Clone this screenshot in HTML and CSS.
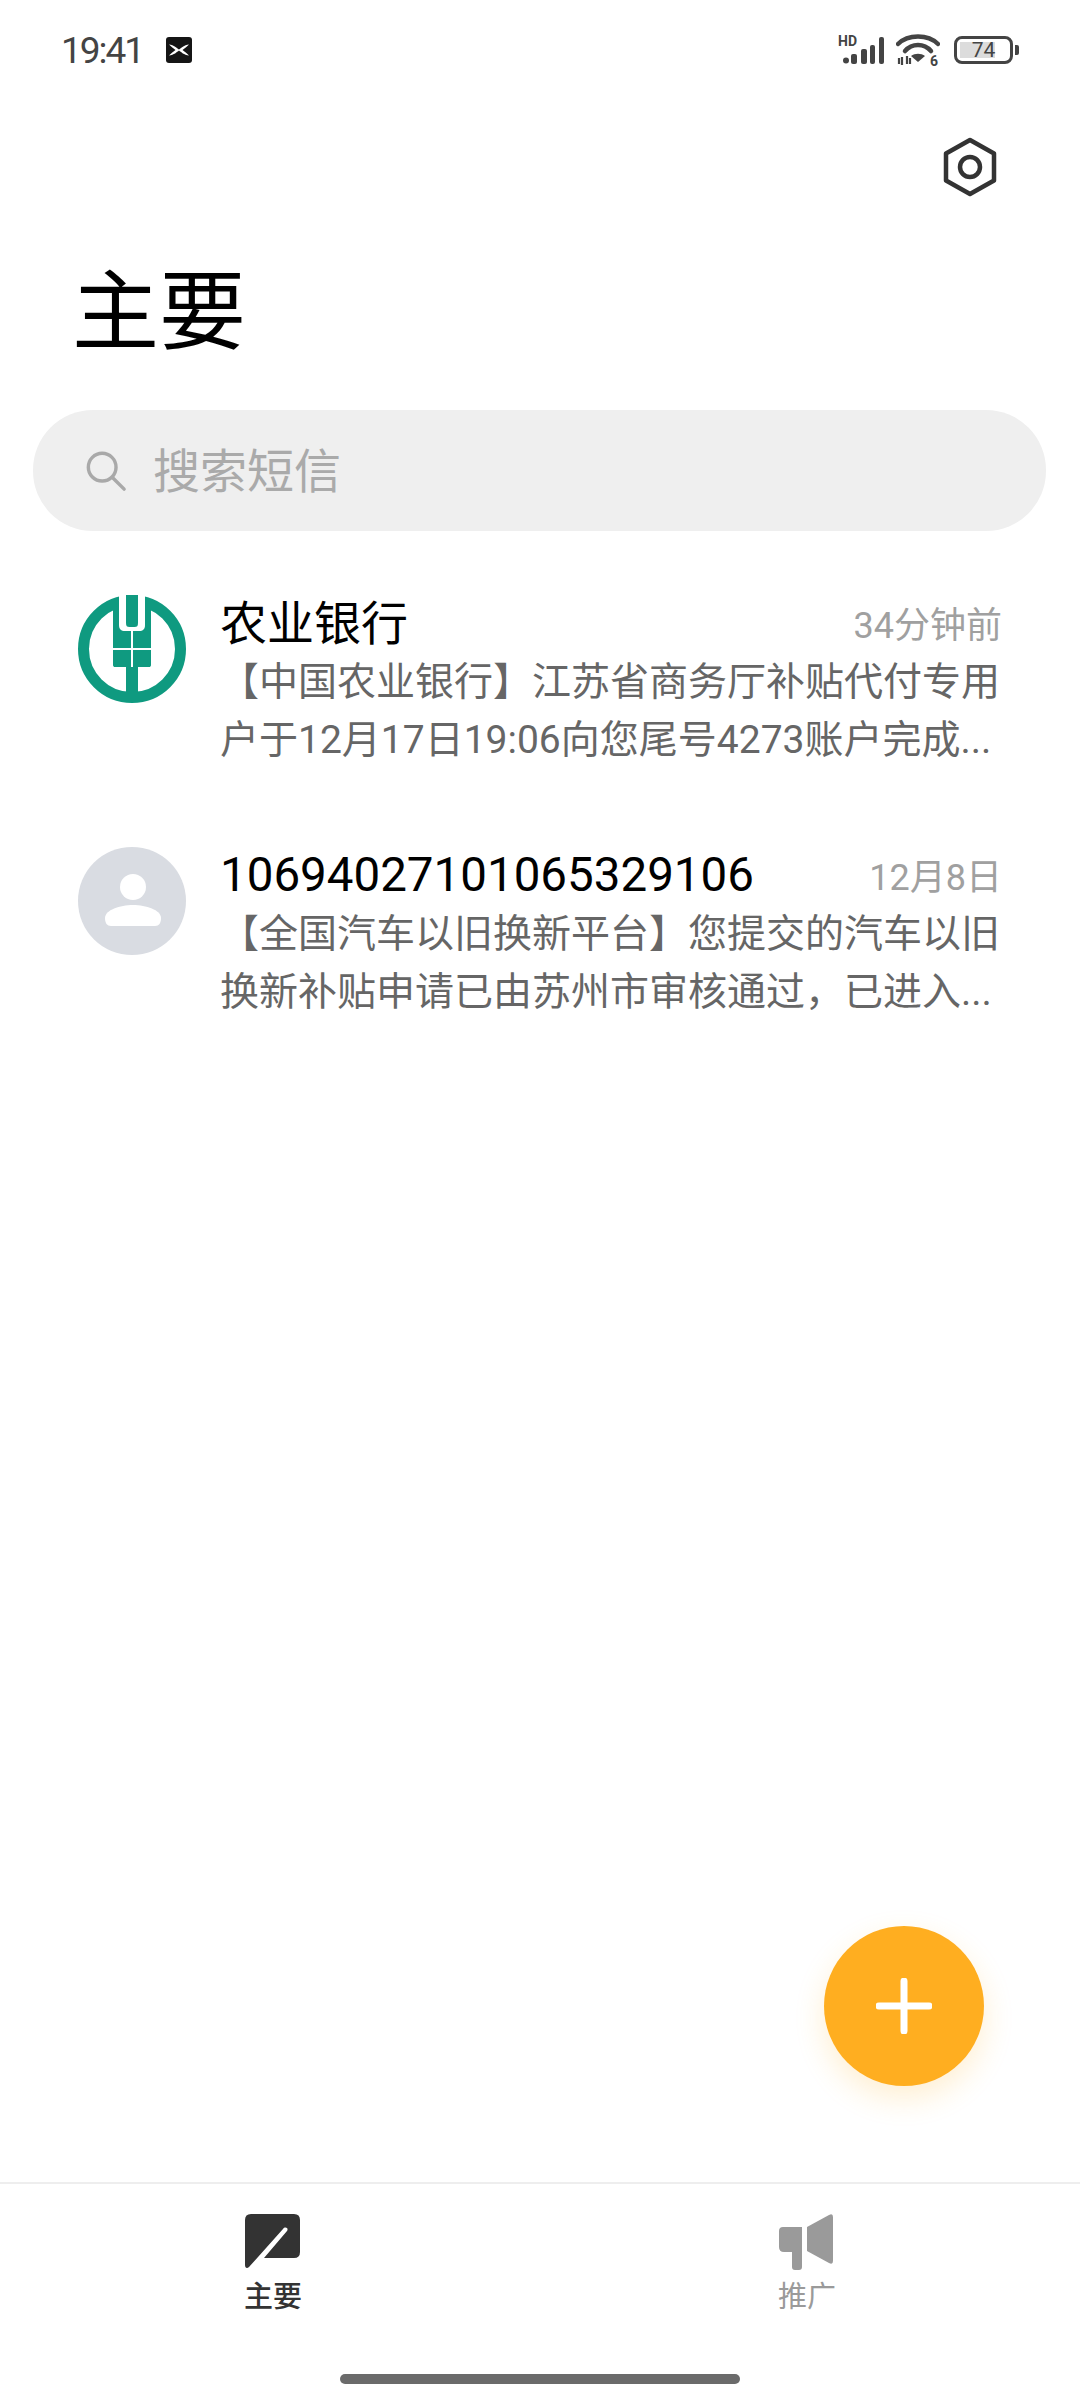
FILE: index.html
```html
<!DOCTYPE html>
<html lang="zh-CN">
<head>
  <meta charset="UTF-8">
  <meta name="viewport" content="width=device-width, initial-scale=1.0">
  <title>主要</title>
  <link rel="stylesheet" href="styles.css">
</head>
<body>
  <div class="page">
    <div class="status-bar">
      <div class="status-left">
        <span class="clock">19:41</span>
        <svg class="app-badge" viewBox="0 0 26 26">
          <rect width="26" height="26" rx="3" fill="#151515"/>
          <path d="M3 7.500C8 8 11 11 13 12.500C15 11 18 8 23 7.500C21 9.500 18.500 11.500 16.500 13C18.500 14.500 21 16.500 23 18.500C18 18 15 15 13 13.500C11 15 8 18 3 18.500C5 16.500 7.500 14.500 9.500 13C7.500 11.500 5 9.500 3 7.500Z" fill="#fff"/>
        </svg>
      </div>
      <div class="status-right">
        <svg class="signal" viewBox="0 -3 48 33">
          <text x="0" y="11" class="hd-label">HD</text>
          <circle cx="8" cy="25.500" r="3" fill="#444"/>
          <rect x="13" y="19" width="6" height="10" rx="2" fill="#444"/>
          <rect x="23" y="14" width="6" height="15" rx="2" fill="#444"/>
          <rect x="32" y="10" width="5" height="19" rx="2" fill="#444"/>
          <rect x="41" y="2" width="5" height="27" rx="2" fill="#444"/>
        </svg>
        <svg class="wifi" viewBox="0 0 44 38">
          <path d="M2 11C12 1 32 1 42 11" fill="none" stroke="#444" stroke-width="4.500" stroke-linecap="round"/>
          <path d="M9 18C16 10 28 10 35 18" fill="none" stroke="#444" stroke-width="4.500" stroke-linecap="round"/>
          <path d="M22 29L15 23C19 20 25 20 29 23Z" fill="#444"/>
          <path d="M3 25L3 31M6 24L6 32M11 23L11 31M14 25L14 31" stroke="#444" stroke-width="2.200"/>
          <text x="34" y="33" class="wifi-six">6</text>
        </svg>
        <div class="battery">
          <div class="battery-shell">
            <div class="battery-fill"></div>
            <span class="battery-num">74</span>
          </div>
          <div class="battery-cap"></div>
        </div>
      </div>
    </div>

    <div class="toolbar">
      <svg class="settings" viewBox="0 0 56 60">
        <path d="M28 3L52 16.500V43.500L28 57L4 43.500V16.500Z" fill="none" stroke="#333" stroke-width="4.500" stroke-linejoin="round"/>
        <circle cx="28" cy="30" r="10" fill="none" stroke="#333" stroke-width="4.500"/>
      </svg>
    </div>

    <h1 class="title">主要</h1>

    <div class="search">
      <svg class="search-icon" viewBox="0 0 44 44">
        <circle cx="18" cy="18" r="14.500" fill="none" stroke="#a9a9a9" stroke-width="3.600"/>
        <path d="M29 29L41 41" stroke="#a9a9a9" stroke-width="3.600" stroke-linecap="round"/>
      </svg>
      <span class="search-text">搜索短信</span>
    </div>

    <div class="list">
      <div class="item">
        <svg class="avatar" viewBox="0 0 108 108">
          <circle cx="54" cy="54" r="48.500" fill="#fff" stroke="#0f9a80" stroke-width="11"/>
          <path d="M35 6H73V70C73 71.500 72 72 71 72H60V106H48V72H37C36 72 35 71.500 35 70Z" fill="#0f9a80"/>
          <path d="M41 0H67V30C67 34 65 36 61 36H47C43 36 41 34 41 30Z" fill="#fff"/>
          <path d="M48 0H60V28C60 31 59 32 56.500 32H51.500C49 32 48 31 48 28Z" fill="#0f9a80"/>
          <path d="M53 36H55V72H53ZM35 53H73V55H35Z" fill="#fff"/>
        </svg>
        <div class="item-body">
          <div class="item-head">
            <span class="item-name">农业银行</span>
            <span class="item-time">34分钟前</span>
          </div>
          <p class="item-text">【中国农业银行】江苏省商务厅补贴代付专用户于12月17日19:06向您尾号4273账户完成...</p>
        </div>
      </div>
      <div class="item">
        <svg class="avatar" viewBox="0 0 108 108">
          <circle cx="54" cy="54" r="54" fill="#d9dce2"/>
          <circle cx="55" cy="40" r="13" fill="#fff"/>
          <path d="M27 71C27 63 42 58 55 58C68 58 83 63 83 71C83 76 81 79 77 79H33C29 79 27 76 27 71Z" fill="#fff"/>
        </svg>
        <div class="item-body">
          <div class="item-head">
            <span class="item-name item-name-num">10694027101065329106</span>
            <span class="item-time">12月8日</span>
          </div>
          <p class="item-text">【全国汽车以旧换新平台】您提交的汽车以旧换新补贴申请已由苏州市审核通过，已进入...</p>
        </div>
      </div>
    </div>

    <div class="fab">
      <svg class="fab-plus" viewBox="0 0 56 56">
        <path d="M28 3V53M3 28H53" stroke="#fff" stroke-width="7" stroke-linecap="round"/>
      </svg>
    </div>

    <div class="tabs">
      <div class="tab tab-active">
        <svg class="tab-icon" viewBox="0 0 56 56">
          <path d="M6 0H49Q55 0 55 6V38Q55 44 49 44H19L42 17C44 14 40 12 38 15L4 53C2 55 0 54 0 51V6Q0 0 6 0Z" fill="#333"/>
        </svg>
        <span class="tab-label">主要</span>
      </div>
      <div class="tab">
        <svg class="tab-icon" viewBox="0 0 56 56">
          <path d="M4 13H23V53Q23 56 20 56H16Q13 56 13 53V38H5Q0 38 0 33V17Q0 13 4 13Z" fill="#9a9a9a"/>
          <path d="M28 13L50 1Q54 -1 54 3V47Q54 51 50 49L28 37Z" fill="#9a9a9a"/>
        </svg>
        <span class="tab-label">推广</span>
      </div>
    </div>

    <div class="home-row">
      <div class="home-bar"></div>
    </div>
  </div>
</body>
</html>
```

FILE: styles.css
```css
* {
  box-sizing: border-box;
}

body {
  margin: 0;
  background: #fff;
  font-family: Roboto, "Noto Sans CJK SC", sans-serif;
}

.page {
  position: relative;
  width: 1080px;
  height: 2400px;
  display: flex;
  flex-direction: column;
  overflow: hidden;
  background: #fff;
}

.status-bar {
  height: 100px;
  padding: 0 61px;
  display: flex;
  justify-content: space-between;
  align-items: center;
}

.status-left {
  display: flex;
  align-items: center;
  gap: 23px;
}

.clock {
  font-size: 37px;
  letter-spacing: -2px;
  color: #444;
}

.app-badge {
  width: 26px;
  height: 26px;
}

.status-right {
  display: flex;
  align-items: center;
  gap: 10px;
}

.signal {
  width: 48px;
  height: 33px;
  margin-top: -3px;
}

.hd-label {
  font-size: 14px;
  font-weight: 700;
  fill: #444;
}

.wifi {
  width: 44px;
  height: 38px;
  margin-bottom: -4px;
}

.wifi-six {
  font-size: 14px;
  font-weight: 700;
  fill: #444;
}

.battery {
  margin-left: 4px;
  display: flex;
  align-items: center;
  gap: 2px;
}

.battery-shell {
  position: relative;
  width: 59px;
  height: 28px;
  border: 3px solid #444;
  border-radius: 8px;
  display: flex;
  align-items: center;
  justify-content: center;
}

.battery-fill {
  position: absolute;
  left: 3px;
  top: 3px;
  bottom: 3px;
  width: 35px;
  background: #dcdcdc;
}

.battery-num {
  position: relative;
  font-size: 21px;
  color: #444;
}

.battery-cap {
  width: 4px;
  height: 10px;
  background: #444;
  border-radius: 0 2px 2px 0;
}

.toolbar {
  height: 60px;
  margin-top: 37px;
  padding-right: 82px;
  display: flex;
  justify-content: flex-end;
}

.settings {
  width: 56px;
  height: 60px;
}

.title {
  margin: 55px 0 0;
  padding-left: 72px;
  font-size: 87px;
  font-weight: 400;
  line-height: 122px;
  color: #000;
}

.search {
  width: 1013px;
  height: 121px;
  margin: 36px 0 0 33px;
  padding-left: 52px;
  display: flex;
  align-items: center;
  gap: 26px;
  background: #efefef;
  border-radius: 60px;
}

.search-icon {
  width: 42px;
  height: 42px;
}

.search-text {
  margin-bottom: 6px;
  font-size: 47px;
  color: #aaa;
}

.list {
  margin-top: 54px;
}

.item {
  height: 252px;
  padding: 10px 78px 0;
  display: flex;
  gap: 34px;
}

.avatar {
  flex: none;
  width: 108px;
  height: 108px;
}

.item-body {
  flex: 1;
  min-width: 0;
  margin-top: -10px;
}

.item-head {
  display: flex;
  justify-content: space-between;
  align-items: center;
  height: 68px;
}

.item-name {
  font-size: 47px;
  color: #000;
}

.item-name-num {
  margin-top: 8px;
  font-size: 47.5px;
}

.item-time {
  margin-top: 6px;
  font-size: 36px;
  color: #a0a0a0;
}

.item-text {
  margin: 0;
  font-size: 39px;
  line-height: 58px;
  color: #666;
}

.fab {
  position: absolute;
  left: 824px;
  top: 1926px;
  width: 160px;
  height: 160px;
  display: flex;
  align-items: center;
  justify-content: center;
  background: #ffae20;
  border-radius: 50%;
  box-shadow: 0 12px 30px rgba(255, 174, 32, 0.2);
}

.fab-plus {
  width: 56px;
  height: 56px;
}

.tabs {
  margin-top: auto;
  height: 170px;
  padding: 30px 245px 0;
  border-top: 2px solid #eee;
  display: flex;
  justify-content: space-between;
}

.tab {
  width: 56px;
  display: flex;
  flex-direction: column;
  align-items: center;
}

.tab-icon {
  width: 56px;
  height: 56px;
}

.tab-label {
  font-size: 29px;
  line-height: 54px;
  white-space: nowrap;
  color: #9a9a9a;
}

.tab-active .tab-label {
  font-weight: 500;
  color: #333;
}

.home-row {
  height: 48px;
  padding-top: 22px;
  display: flex;
  justify-content: center;
}

.home-bar {
  width: 400px;
  height: 10px;
  background: #6b6b6b;
  border-radius: 5px;
}
```
